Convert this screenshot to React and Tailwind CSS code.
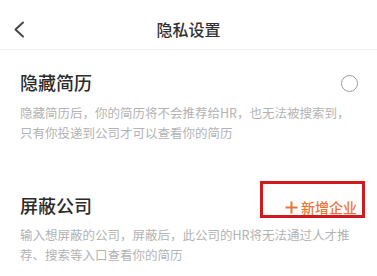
import React from "react";

const font = { fontFamily: '"Noto Sans CJK SC", "Noto Sans", sans-serif' };

export default function App() {
  return (
    <div className="w-[377px] h-[276px] bg-white overflow-hidden" style={font}>
      {/* header */}
      <div className="relative h-[50px] pt-[9px] border-b border-[#f2f2f2] flex items-center justify-center">
        <button className="absolute left-[12px] top-[20px] w-[14px] h-[19px] flex items-center justify-center">
          <svg width="12" height="17" viewBox="0 0 12 17" fill="none">
            <path d="M10 1.5L2.5 8.5L10 15.5" stroke="#444" strokeWidth="1.9" strokeLinecap="round" strokeLinejoin="round" />
          </svg>
        </button>
        <div className="text-[16px] leading-[20px] text-[#333] font-medium">隐私设置</div>
      </div>

      {/* hide resume */}
      <div className="px-5 pt-[19px]">
        <div className="flex items-center justify-between h-[26px]">
          <div className="text-[18px] leading-[26px] text-[#2b2b2b] font-medium">隐藏简历</div>
          <div className="w-[17px] h-[17px] mr-[-1px] mt-[3px] rounded-full border-[1.5px] border-[#9a9a9a]" />
        </div>
        <p className="mt-[8px] text-[12.5px] leading-[20px] text-[#b3b3b3] whitespace-nowrap">
          隐藏简历后，你的简历将不会推荐给HR，也无法被搜索到，
          <br />
          只有你投递到公司才可以查看你的简历
        </p>
      </div>

      {/* block companies */}
      <div className="px-5 pt-[49px]">
        <div className="flex items-center justify-between h-[26px]">
          <div className="text-[18px] leading-[26px] text-[#2b2b2b] font-medium">屏蔽公司</div>
          <div className="relative flex items-center gap-[3px] mt-[4px] text-[#ea7436]">
            <svg width="13" height="13" viewBox="0 0 13 13" fill="none">
              <path d="M6.5 0.5V12.5M0.5 6.5H12.5" stroke="#ea7436" strokeWidth="2" />
            </svg>
            <span className="text-[14px] leading-[20px] font-medium">新增企业</span>
            <div className="absolute left-[-25px] right-[-8px] top-[-16px] bottom-[-1px] border-[3px] border-[#cf1a1e]" />
          </div>
        </div>
        <p className="mt-[7px] text-[12.5px] leading-[20px] text-[#b3b3b3] whitespace-nowrap">
          输入想屏蔽的公司，屏蔽后，此公司的HR将无法通过人才推
          <br />
          荐、搜索等入口查看你的简历
        </p>
      </div>
    </div>
  );
}
